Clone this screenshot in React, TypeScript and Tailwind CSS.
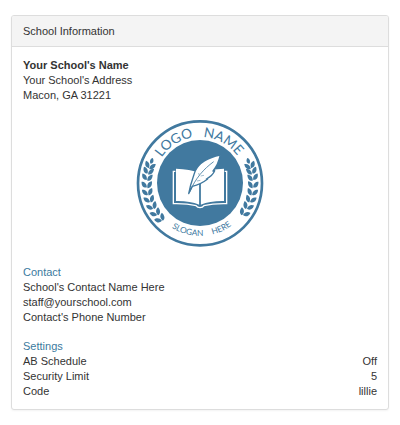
import type { ReactNode } from 'react';

const BLUE = '#41799f';

interface Setting {
  label: string;
  value: string;
}

const settings: Setting[] = [
  { label: 'AB Schedule', value: 'Off' },
  { label: 'Security Limit', value: '5' },
  { label: 'Code', value: 'lillie' },
];

// Angles in degrees below the horizontal, from the foot of the branch to its tip
const leftBranch = [42, 34, 26, 18, 10, 2, -6, -13, -19];
const rightBranch = [34, 26, 18, 10, 2, -6, -13, -19];

function Branch({ angles }: { angles: number[] }) {
  return (
    <g>
      {angles.map((angle) => (
        <g key={angle} transform={`rotate(${-angle}) translate(-159 0)`}>
          <path d="M-1 7 C-13 8 -17 0 -16 -11 C-8 -11 0 -5 -1 7Z" />
          <path d="M1 9 C-1 -3 5 -10 15 -11 C16 1 11 9 1 9Z" />
        </g>
      ))}
      <path
        transform={`rotate(${-angles[angles.length - 1]}) translate(-159 -14)`}
        d="M0 7 C-7 0 -6 -8 0 -12 C7 -6 7 2 0 7Z"
      />
    </g>
  );
}

function SchoolLogo() {
  return (
    <svg viewBox="18 21 384 384" className="mx-auto mt-4 mb-[18px] block size-32" role="img" aria-label="School logo">
      <defs>
        <path id="logo-name-arc" d="M71 214 A139 139 0 0 1 349 214" />
        <path id="logo-slogan-arc" d="M52 214 A158 158 0 0 0 368 214" />
      </defs>
      <circle cx="210" cy="214" r="186" fill="white" stroke={BLUE} strokeWidth="8" />
      <circle cx="210" cy="213" r="129" fill={BLUE} />

      <g fill={BLUE} className="font-[Lato,sans-serif]">
        <text fontSize="41" textAnchor="middle">
          <textPath href="#logo-name-arc" startOffset="32%">LOGO</textPath>
        </text>
        <text fontSize="41" textAnchor="middle">
          <textPath href="#logo-name-arc" startOffset="66%">NAME</textPath>
        </text>
        <text fontSize="25" textAnchor="middle">
          <textPath href="#logo-slogan-arc" startOffset="42%">SLOGAN</textPath>
        </text>
        <text fontSize="25" textAnchor="middle">
          <textPath href="#logo-slogan-arc" startOffset="64%">HERE</textPath>
        </text>
      </g>

      <g fill={BLUE}>
        <g transform="translate(210 214)">
          <Branch angles={leftBranch} />
        </g>
        <g transform="translate(210 214) scale(-1 1)">
          <Branch angles={rightBranch} />
        </g>
      </g>

      {/* Book */}
      <path
        d="M136 178 H130 V275 Q170 274 198 281 Q202 287 210 287 Q218 287 222 281 Q250 274 290 275 V178 H284"
        fill="none"
        stroke="white"
        strokeWidth="4"
      />
      <path d="M138 170 Q180 171 208 183 V278 Q178 266 138 267Z" fill="white" />
      <path d="M282 170 Q240 171 212 183 V278 Q242 266 282 267Z" fill="white" />
      <path d="M210 184 V279" stroke={BLUE} strokeWidth="4" />

      {/* Quill */}
      <path
        d="M271 129 C236 136 207 153 196 176 C190 191 187 205 182 219 L176 245 L187 223 C205 219 219 212 233 201 L229 201 C241 194 251 184 254 176 L249 177 C261 163 267 147 271 129Z"
        fill="white"
        stroke={BLUE}
        strokeWidth="4"
        strokeLinejoin="round"
      />
      <path d="M251 149 C221 171 196 199 178 242" fill="none" stroke={BLUE} strokeWidth="2.5" />
      <path d="M201 207 L211 205 M212 192 L222 190 M206 183 L208 190" fill="none" stroke={BLUE} strokeWidth="1.5" />
    </svg>
  );
}

function SectionLink({ href, children }: { href: string; children: ReactNode }) {
  return (
    <a href={href} className="text-[#3b7a9e] hover:underline">
      {children}
    </a>
  );
}

export default function App() {
  return (
    <main className="px-[11px] py-[15px] font-['Liberation_Sans',Arial,sans-serif] text-[11px] leading-[15px] text-[#333]">
      <section className="overflow-hidden rounded-[3px] border border-[#ddd] bg-white shadow-xs">
        <h1 className="border-b border-[#ddd] bg-[#f4f4f4] px-[11px] pt-2 pb-[7px]">School Information</h1>

        <div className="px-[11px] pt-[11px] pb-2.5">
          <address className="not-italic">
            <strong className="block font-bold">Your School's Name</strong>
            <p>Your School's Address</p>
            <p>Macon, GA 31221</p>
          </address>

          <SchoolLogo />

          <div id="contact" className="mb-[14px]">
            <SectionLink href="#contact">Contact</SectionLink>
            <p>School's Contact Name Here</p>
            <p>staff@yourschool.com</p>
            <p>Contact's Phone Number</p>
          </div>

          <div id="settings">
            <SectionLink href="#settings">Settings</SectionLink>
            <table className="w-full">
              <tbody>
                {settings.map((setting) => (
                  <tr key={setting.label}>
                    <th scope="row" className="p-0 text-left font-normal">{setting.label}</th>
                    <td className="p-0 text-right">{setting.value}</td>
                  </tr>
                ))}
              </tbody>
            </table>
          </div>
        </div>
      </section>
    </main>
  );
}
